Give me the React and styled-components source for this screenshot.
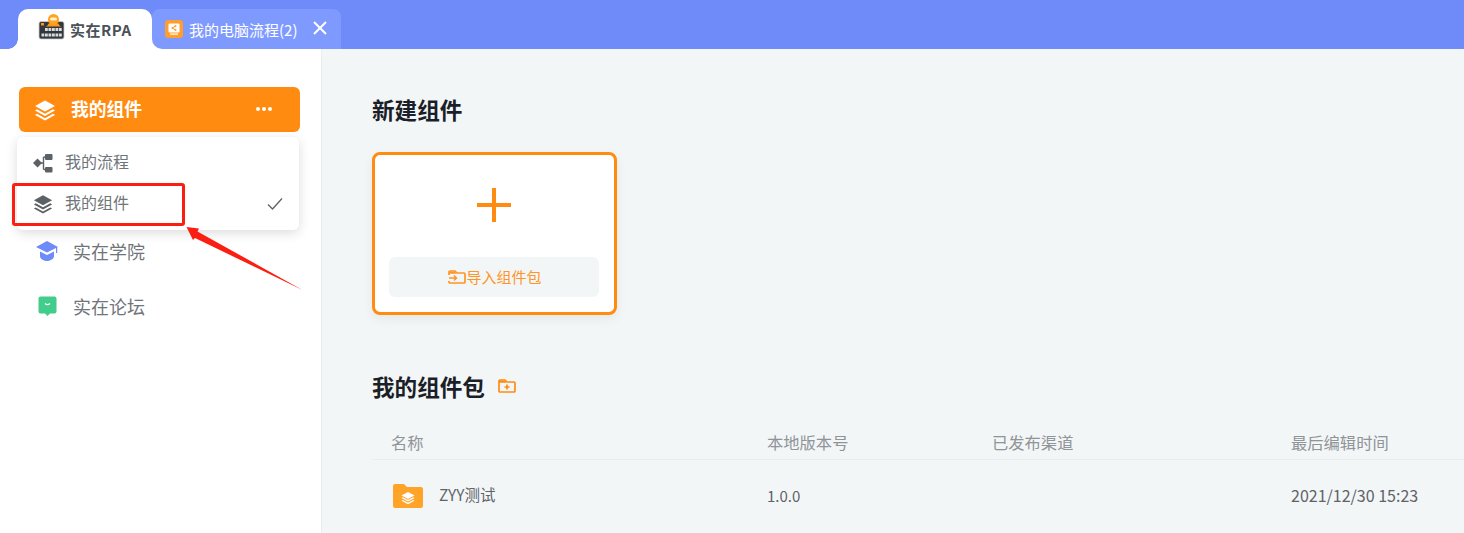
import React from "react";
import styled, { createGlobalStyle } from "styled-components";

const GlobalStyle = createGlobalStyle`
  html, body { margin: 0; padding: 0; height: 100%; overflow: hidden; }
  body { font-family: "Noto Sans CJK SC", "Noto Sans", sans-serif; background: #fff; }
`;

const Page = styled.div`
  position: relative;
  width: 1464px;
  height: 533px;
  overflow: hidden;
  display: flex;
  flex-direction: column;
`;

const TabBar = styled.header`
  height: 49px;
  flex: none;
  box-sizing: border-box;
  padding: 9px 0 0 18px;
  background: #6e8bf9;
  display: flex;
  align-items: stretch;
`;

const Tab = styled.div`
  position: relative;
  display: flex;
  align-items: center;
  gap: ${(p) => p.$gap}px;
  box-sizing: border-box;
  width: ${(p) => p.$width}px;
  padding-left: ${(p) => p.$pad}px;
  background: ${(p) => (p.$active ? "#fff" : "#7f9aff")};
  color: ${(p) => (p.$active ? "#4a5157" : "#fff")};
  border-radius: ${(p) => (p.$active ? "10px 10px 0 0" : "8px 8px 0 10px")};
  font-size: 15px;
  font-weight: ${(p) => (p.$active ? 700 : 400)};
  letter-spacing: ${(p) => (p.$active ? "0.5px" : "0")};
  white-space: nowrap;
  ${(p) =>
    p.$active &&
    `
    &::before, &::after {
      content: "";
      position: absolute;
      bottom: 0;
      width: 10px;
      height: 10px;
    }
    &::before {
      left: -10px;
      background: radial-gradient(circle at 0 0, #6e8bf9 9.5px, #fff 10px);
    }
    &::after {
      right: -10px;
      background: #fff;
      z-index: 0;
    }
  `}
  & > * { position: relative; z-index: 1; }
`;

const TabClose = styled.span`
  display: flex;
  margin-left: 10px;
  margin-bottom: 2px;
`;

const LogoWrap = styled.span`
  display: flex;
  margin-bottom: 4px;
`;

const Body = styled.div`
  flex: 1;
  display: flex;
  min-height: 0;
`;

const Sidebar = styled.aside`
  width: 322px;
  flex: none;
  box-sizing: border-box;
  background: #fff;
  border-right: 1px solid #e9edef;
  padding: 38px 21px 0 19px;
`;

const SwitchButton = styled.div`
  height: 45px;
  box-sizing: border-box;
  padding: 0 28px 0 15px;
  background: #ff8b11;
  border-radius: 6px;
  color: #fff;
  display: flex;
  align-items: center;
  gap: 15px;
  font-size: 17.8px;
  font-weight: 700;
`;

const Label = styled.span`
  display: block;
  margin-bottom: ${(p) => p.$lift || 0}px;
`;

const Dots = styled.span`
  margin-left: auto;
  margin-bottom: 1px;
  display: flex;
  gap: 2px;
  & > i {
    width: 4px;
    height: 4px;
    border-radius: 50%;
    background: #fff;
  }
`;

const NavList = styled.nav`
  margin-top: 103px;
  display: flex;
  flex-direction: column;
  gap: 23px;
`;

const NavItem = styled.div`
  height: 32px;
  padding-left: 17px;
  display: flex;
  align-items: center;
  gap: 15px;
  font-size: 18px;
  color: #70757a;
`;

const Menu = styled.div`
  position: absolute;
  left: 17px;
  top: 137px;
  width: 282px;
  height: 93px;
  box-sizing: border-box;
  padding-top: 5px;
  background: #fff;
  border-radius: 6px;
  box-shadow: 0 3px 12px rgba(0, 0, 0, 0.14);
`;

const MenuItem = styled.div`
  height: 41px;
  box-sizing: border-box;
  padding: 0 16px;
  display: flex;
  align-items: center;
  gap: 12px;
  font-size: 16px;
  color: #70757a;
`;

const Check = styled.span`
  margin-left: auto;
  display: flex;
`;

const Highlight = styled.div`
  position: absolute;
  left: 12px;
  top: 183px;
  width: 173px;
  height: 43px;
  box-sizing: border-box;
  border: 3px solid #fb1e12;
  border-radius: 3px;
`;

const Arrow = styled.svg`
  position: absolute;
  left: 180px;
  top: 220px;
`;

const Main = styled.main`
  flex: 1;
  min-width: 0;
  box-sizing: border-box;
  background: #f3f6f7;
  padding: 46px 0 0 50px;
`;

const Heading = styled.h2`
  margin: 0;
  display: flex;
  align-items: center;
  gap: 13px;
  height: 32px;
  box-sizing: border-box;
  padding-bottom: 4px;
  font-size: 22.6px;
  font-weight: 700;
  color: #1b1f28;
`;

const NewCard = styled.div`
  margin-top: 25px;
  width: 245px;
  height: 163px;
  box-sizing: border-box;
  border: 3px solid #ff8b11;
  border-radius: 8px;
  background: #fff;
  box-shadow: 0 4px 12px rgba(0, 0, 0, 0.06);
  padding: 0 15px 0 14px;
  display: flex;
  flex-direction: column;
  align-items: stretch;
`;

const PlusArea = styled.div`
  height: 102px;
  box-sizing: border-box;
  padding-bottom: 2px;
  display: flex;
  align-items: center;
  justify-content: center;
`;

const ImportButton = styled.div`
  height: 40px;
  box-sizing: border-box;
  padding: 0 0 1px 2px;
  border-radius: 6px;
  background: #f3f6f7;
  color: #ff9526;
  font-size: 15px;
  display: flex;
  align-items: center;
  justify-content: center;
`;

const PackHeading = styled(Heading)`
  margin-top: 57px;
`;

const Table = styled.div`
  margin-top: 22px;
`;

const Row = styled.div`
  display: grid;
  grid-template-columns: 376px 225px 299px 1fr;
  padding-left: 19px;
  align-items: center;
  font-size: ${(p) => (p.$head ? 16.3 : 15)}px;
  color: ${(p) => (p.$head ? "#8f9499" : "#5e6368")};
  height: ${(p) => (p.$head ? 33 : 72)}px;
  border-bottom: ${(p) => (p.$head ? "1px solid #e9edef" : "none")};
`;

const NameCell = styled.div`
  display: flex;
  align-items: center;
  gap: 16px;
  padding-left: 2px;
  font-size: 15.5px;
`;

const Cell = styled.div`
  font-size: ${(p) => p.$size || "inherit"};
  margin-bottom: ${(p) => p.$lift || 0}px;
  white-space: nowrap;
`;

const LayersIcon = ({ color = "#fff", size = 22 }) => (
  <svg width={size} height={size} viewBox="0 0 22 22">
    <path d="M11 1.500 21 7l-10 5.500L1 7z" fill={color} />
    <path d="M3 10.300 1 11.500 11 17l10-5.500-2-1.200-8 4.400z" fill={color} />
    <path d="M3 14.800 1 16l10 5.500L21 16l-2-1.200-8 4.400z" fill={color} />
  </svg>
);

const FlowIcon = () => (
  <svg width="20" height="20" viewBox="0 0 20 20">
    <path d="M0 10l4.500-4.500L9 10l-4.500 4.500z" fill="#5c6166" />
    <rect x="12" y="1" width="7.500" height="6" rx="1" fill="#5c6166" />
    <rect x="12" y="14" width="7.500" height="5.500" rx="1" fill="#5c6166" />
    <path d="M8 10h2.500M10.500 4h2M10.500 16.500h2M10.500 4v12.500" stroke="#5c6166" strokeWidth="1.400" fill="none" />
  </svg>
);

const CheckIcon = () => (
  <svg width="16" height="14" viewBox="0 0 16 14">
    <path d="M1 7.500 5.500 12 15 1.500" stroke="#5f6468" strokeWidth="1.300" fill="none" />
  </svg>
);

const HatIcon = () => (
  <svg width="22" height="22" viewBox="0 0 22 22">
    <path d="M11 1 22 7l-11 5.500L0 7z" fill="#6e8bf9" />
    <path d="M4 11.500 11 15l7-3.500V16c0 2.600-3.200 5-7 5s-7-2.400-7-5z" fill="#6e8bf9" />
    <rect x="20" y="7" width="1.200" height="6" fill="#6e8bf9" />
  </svg>
);

const ChatIcon = () => (
  <svg width="22" height="22" viewBox="-1.500 0 22 22">
    <path d="M3 1.500h14a2 2 0 0 1 2 2v13a2 2 0 0 1-2 2h-4.500L10 21l-2.500-2.500H3a2 2 0 0 1-2-2v-13a2 2 0 0 1 2-2z" fill="#43cd8c" />
    <path d="M7.500 8.500c1.400 1.200 3.600 1.200 5 0" stroke="#fff" strokeWidth="1.300" fill="none" />
  </svg>
);

const RobotLogo = () => (
  <svg width="27" height="26" viewBox="0 0 27 26">
    <rect x="1" y="7.500" width="25" height="17.500" rx="2" fill="#33373c" stroke="#c9cdd0" strokeWidth="0.800" />
    <rect x="3" y="9" width="3" height="2.500" fill="#ff9417" />
    <path d="M7 12.500c1.500 0 3-1 3.500-3h10c.5 2 2 3 3.500 3z" fill="#ff9417" />
    <circle cx="15.500" cy="5.500" r="5.500" fill="#ffa21f" />
    <rect x="12" y="3.500" width="7" height="3" rx="1.500" fill="#fff1d2" />
    {[0, 1, 2, 3, 4].map((i) => (
      <rect key={i} x={7 + i * 3.500} y="14" width="2.800" height="3" fill="#d8dbdc" />
    ))}
    {[0, 1, 2, 3, 4, 5].map((i) => (
      <rect key={i} x={3.500 + i * 3.500} y="19.500" width="2.800" height="3" fill="#d8dbdc" />
    ))}
  </svg>
);

const FlowTabIcon = () => (
  <svg width="18" height="18" viewBox="0 0 18 18">
    <rect width="18" height="18" rx="3.500" fill="#ff9e2c" />
    <rect x="3.500" y="3.500" width="11" height="9" rx="1" fill="#fff" />
    <rect x="5" y="13.500" width="8" height="1.200" fill="#fff" />
    <path d="M10.500 6 7.500 8l3 2" stroke="#ff9e2c" strokeWidth="1" fill="none" />
    <circle cx="7.500" cy="8" r="1.100" fill="#ff9e2c" />
    <circle cx="10.500" cy="6" r="1" fill="#ff9e2c" />
    <circle cx="10.500" cy="10" r="1" fill="#ff9e2c" />
  </svg>
);

const CloseIcon = () => (
  <svg width="14" height="14" viewBox="0 0 14 14">
    <path d="M1 1l12 12M13 1 1 13" stroke="#fff" strokeWidth="2" />
  </svg>
);

const PlusIcon = () => (
  <svg width="34" height="34" viewBox="0 0 34 34">
    <path d="M17 0v34M0 17h34" stroke="#ff8b11" strokeWidth="4" />
  </svg>
);

const ImportIcon = () => (
  <svg width="18" height="14" viewBox="0 0 18 14">
    <path d="M1 5V2a1 1 0 0 1 1-1h5l2 2h7a1 1 0 0 1 1 1v8a1 1 0 0 1-1 1H2a1 1 0 0 1-1-1v-1" stroke="#ff9526" strokeWidth="1.700" fill="none" />
    <path d="M1 1.500h6l1.500 2.200H1z" fill="#ff9526" />
    <path d="M1 8h7M6 5.500 8.500 8 6 10.500" stroke="#ff9526" strokeWidth="1.500" fill="none" />
  </svg>
);

const AddFolderIcon = () => (
  <svg width="18" height="14" viewBox="0 0 18 14">
    <path d="M1 2a1 1 0 0 1 1-1h5l2 2h7a1 1 0 0 1 1 1v8a1 1 0 0 1-1 1H2a1 1 0 0 1-1-1z" stroke="#ff8b11" strokeWidth="1.700" fill="none" />
    <path d="M1 1.500h6l1.500 2.200H1z" fill="#ff8b11" />
    <path d="M9 5.500v5M6.500 8h5" stroke="#ff8b11" strokeWidth="1.700" />
  </svg>
);

const FolderIcon = () => (
  <svg width="30" height="24" viewBox="0 0 30 24">
    <path d="M0 2a2 2 0 0 1 2-2h8c1 0 1.600.5 2.200 1.200L14 3h14a2 2 0 0 1 2 2v17a2 2 0 0 1-2 2H2a2 2 0 0 1-2-2z" fill="#ffa329" />
    <path d="M15 8l6.500 3.500L15 15l-6.500-3.500z" fill="#fff" />
    <path d="M9.800 13.200 8.500 14l6.500 3.500 6.500-3.500-1.300-.8L15 16z" fill="#fff" />
    <path d="M9.800 16 8.500 16.800l6.500 3.500 6.500-3.500-1.300-.8L15 18.800z" fill="#fff" />
  </svg>
);

export default function App() {
  return (
    <Page>
      <GlobalStyle />
      <TabBar>
        <Tab $active $width={134} $pad={20} $gap={5}>
          <LogoWrap>
            <RobotLogo />
          </LogoWrap>
          <span>实在RPA</span>
        </Tab>
        <Tab $width={189} $pad={13} $gap={6}>
          <FlowTabIcon />
          <span>我的电脑流程(2)</span>
          <TabClose>
            <CloseIcon />
          </TabClose>
        </Tab>
      </TabBar>
      <Body>
        <Sidebar>
          <SwitchButton>
            <LayersIcon />
            <Label $lift={3}>我的组件</Label>
            <Dots>
              <i />
              <i />
              <i />
            </Dots>
          </SwitchButton>
          <NavList>
            <NavItem>
              <HatIcon />
              实在学院
            </NavItem>
            <NavItem>
              <ChatIcon />
              实在论坛
            </NavItem>
          </NavList>
        </Sidebar>
        <Main>
          <Heading>新建组件</Heading>
          <NewCard>
            <PlusArea>
              <PlusIcon />
            </PlusArea>
            <ImportButton>
              <ImportIcon />
              导入组件包
            </ImportButton>
          </NewCard>
          <PackHeading>
            我的组件包
            <AddFolderIcon />
          </PackHeading>
          <Table>
            <Row $head>
              <Cell $lift={1}>名称</Cell>
              <Cell $lift={1}>本地版本号</Cell>
              <Cell $lift={1}>已发布渠道</Cell>
              <Cell $lift={1}>最后编辑时间</Cell>
            </Row>
            <Row>
              <NameCell>
                <FolderIcon />
                <Label $lift={4}>ZYY测试</Label>
              </NameCell>
              <Cell $lift={2}>1.0.0</Cell>
              <Cell />
              <Cell $size="16px" $lift={2}>2021/12/30 15:23</Cell>
            </Row>
          </Table>
        </Main>
      </Body>
      <Menu>
        <MenuItem>
          <FlowIcon />
          <Label $lift={4}>我的流程</Label>
        </MenuItem>
        <MenuItem>
          <LayersIcon color="#5c6166" size={20} />
          <Label $lift={4}>我的组件</Label>
          <Check>
            <CheckIcon />
          </Check>
        </MenuItem>
      </Menu>
      <Highlight />
      <Arrow width="130" height="75" viewBox="0 0 130 75">
        <path d="M6.500 7 19 8.500 17.500 11.500 122.500 70 15 18 13 20z" fill="#fb1e12" />
      </Arrow>
    </Page>
  );
}
